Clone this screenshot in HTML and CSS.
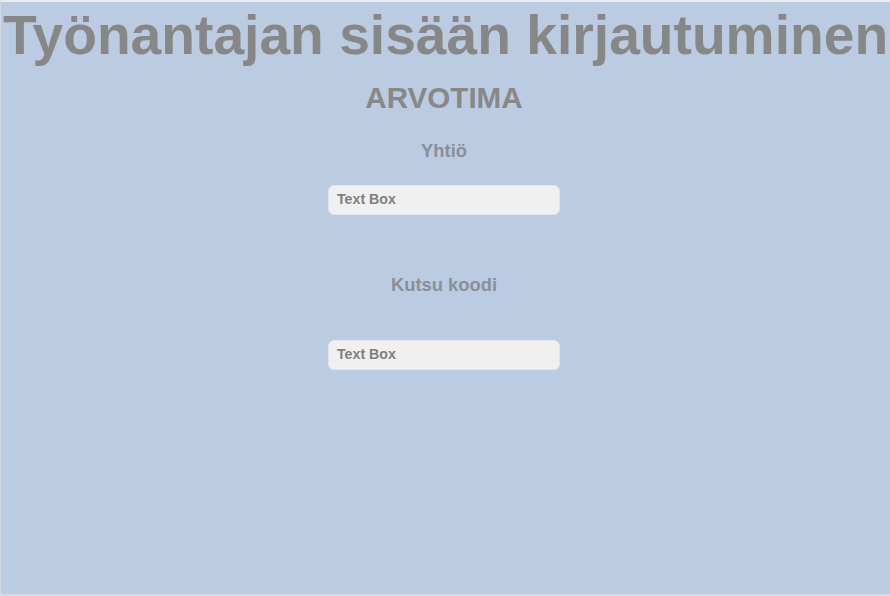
FILE: index.html
```html
<!DOCTYPE html>
<html lang="fi">
<head>
<meta charset="utf-8">
<title>Työnantajan sisään kirjautuminen</title>
<link rel="stylesheet" href="styles.css">
</head>
<body>
<div class="page">
  <h1 class="title">Työnantajan sisään kirjautuminen</h1>
  <h2 class="brand">ARVOTIMA</h2>
  <div class="label label-company">Yhtiö</div>
  <div class="textbox box-company">Text Box</div>
  <div class="label label-code">Kutsu koodi</div>
  <div class="textbox box-code">Text Box</div>
</div>
</body>
</html>
```
FILE: styles.css
```css
html, body {
  margin: 0;
  padding: 0;
  background: #f0f2f5;
}
.page {
  box-sizing: border-box;
  width: 890px;
  height: 596px;
  background: #bbcce2;
  border-top: 2px solid #e8ebef;
  border-left: 1px solid #d3d9e1;
  border-bottom: 2px solid #d4dce7;
  padding: 3px 3px 0 0;
  display: flex;
  flex-direction: column;
  align-items: center;
  font-family: "Liberation Sans", Arial, sans-serif;
  font-weight: bold;
  overflow: hidden;
}
.title {
  margin: 0 0 0 3px;
  font-size: 55.2px;
  line-height: 60px;
  color: #878787;
  white-space: nowrap;
  font-weight: bold;
}
.brand {
  margin: 16px 0 0;
  font-size: 29.6px;
  line-height: 34px;
  color: #888888;
  font-weight: bold;
}
.label {
  color: #8a8f98;
  text-align: center;
}
.label-company {
  margin-top: 26px;
  font-size: 18.4px;
  line-height: 20px;
}
.label-code {
  margin-top: 59px;
  font-size: 18.4px;
  line-height: 22px;
}
.textbox {
  box-sizing: border-box;
  width: 232px;
  height: 30px;
  padding: 0 8px;
  background: #f0f0f0;
  border: 1px solid #e2e6ec;
  border-radius: 6px;
  font-size: 14.2px;
  line-height: 26px;
  color: #7f7f7f;
}
.box-company {
  margin-top: 24px;
}
.box-code {
  margin-top: 44px;
}
```
